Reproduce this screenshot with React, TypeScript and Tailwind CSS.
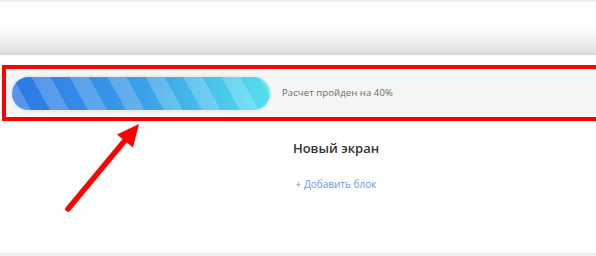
import React from "react";

const Arrow: React.FC = () => (
  <svg
    className="absolute left-0 top-0 pointer-events-none"
    width={596}
    height={256}
    viewBox="0 0 596 256"
  >
    <line
      x1={68}
      y1={209}
      x2={127}
      y2={138}
      stroke="#ff0000"
      strokeWidth={5.5}
      strokeLinecap="round"
    />
    <polygon points="139,124 117,134.5 133,147.5" fill="#ff0000" />
  </svg>
);

const App: React.FC = () => {
  return (
    <div className="relative w-[596px] h-[256px] overflow-hidden bg-white flex flex-col font-['Open_Sans',sans-serif]">
      {/* верхняя панель */}
      <div className="h-[2px] bg-[#eeeeee]" />
      <div className="h-[53px] bg-[linear-gradient(to_bottom,#ffffff_45%,#e4e4e4_92%,#d6d6d6)]" />
      <div className="h-[10px]" />

      {/* блок с прогрессом */}
      <div className="ml-[2px] w-[620px] h-[56px] border-4 border-[#ff0000] bg-white p-px">
        <div className="h-full bg-[#f4f5f5] flex items-center pl-[3px]">
          <div className="w-[262px] h-[37px] p-[2px] rounded-full bg-[#eaedf0]">
            <div className="h-[33px] rounded-full bg-[image:repeating-linear-gradient(61deg,rgba(255,255,255,0.2)_0px,rgba(255,255,255,0.2)_16.6px,transparent_16.6px,transparent_33.2px),linear-gradient(90deg,#2c77e6,#3a9fe8_50%,#55e0ee)]" />
          </div>
          <span className="ml-[10px] text-[9.5px] text-[#6a6a6a] tracking-[0.1px]">
            Расчет пройден на 40%
          </span>
        </div>
      </div>

      {/* экран */}
      <div className="w-[672px] flex flex-col items-center">
        <h2 className="mt-[18px] h-[18px] leading-[18px] text-[13px] font-semibold text-[#333333]">
          Новый экран
        </h2>
        <button className="mt-[20px] h-[14px] leading-[14px] text-[10px] text-[#5b9cf0]">
          + Добавить блок
        </button>
      </div>

      <div className="flex-1" />
      <div className="h-[3px] bg-[#eeeeee]" />

      <Arrow />
    </div>
  );
};

export default App;
